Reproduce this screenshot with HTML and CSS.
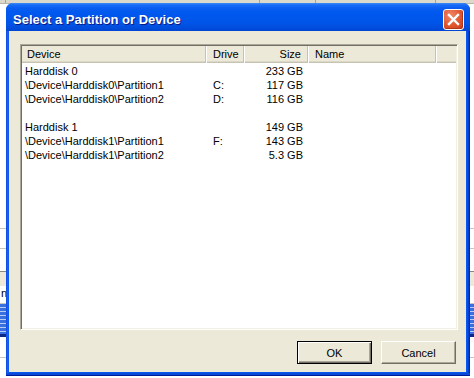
FILE: index.html
```html
<!DOCTYPE html>
<html lang="en">
<head>
  <meta charset="UTF-8">
  <title>Select a Partition or Device</title>
  <link rel="stylesheet" href="styles.css">
</head>
<body>
  <!-- the application window behind the dialog -->
  <div class="app">
    <div class="app-top">
      <span class="seg seg-a"></span>
      <span class="seg seg-b"></span>
      <span class="seg seg-c"></span>
      <span class="seg seg-d"></span>
    </div>
    <div class="app-body">
      <div class="app-row r1"></div>
      <div class="app-row r2"></div>
      <div class="app-row r3"></div>
      <div class="app-row r4"></div>
      <div class="app-row r5">n</div>
      <div class="app-row r6"></div>
      <div class="app-row r7"></div>
    </div>
  </div>

  <div class="dialog">
    <div class="titlebar">
      <span class="title">Select a Partition or Device</span>
      <button class="close" title="Close">
        <svg width="13" height="13" viewBox="0 0 13 13">
          <path d="M2 2 L11 11 M11 2 L2 11" stroke="#fff" stroke-width="2.4" stroke-linecap="square"/>
        </svg>
      </button>
    </div>

    <div class="client">
      <div class="listbox">
        <div class="lv-head">
          <div class="hd">Device</div>
          <div class="hd">Drive</div>
          <div class="hd right">Size</div>
          <div class="hd">Name</div>
          <div class="hd fill"></div>
        </div>
        <div class="lv-body">
          <div class="row"><span>Harddisk 0</span><span></span><span class="right">233 GB</span><span></span></div>
          <div class="row"><span>\Device\Harddisk0\Partition1</span><span>C:</span><span class="right">117 GB</span><span></span></div>
          <div class="row"><span>\Device\Harddisk0\Partition2</span><span>D:</span><span class="right">116 GB</span><span></span></div>
          <div class="row"><span></span><span></span><span></span><span></span></div>
          <div class="row"><span>Harddisk 1</span><span></span><span class="right">149 GB</span><span></span></div>
          <div class="row"><span>\Device\Harddisk1\Partition1</span><span>F:</span><span class="right">143 GB</span><span></span></div>
          <div class="row"><span>\Device\Harddisk1\Partition2</span><span></span><span class="right">5.3 GB</span><span></span></div>
        </div>
      </div>

      <div class="buttons">
        <button class="btn default">OK</button>
        <button class="btn">Cancel</button>
      </div>
    </div>
  </div>
</body>
</html>
```

FILE: styles.css
```css
:root {
  --face: #ece9d8;
  --shadow: #aca899;
  --dark: #716f64;
  --xp-blue: #0058ee;
}
body {
  margin: 0;
  width: 474px;
  height: 378px;
  overflow: hidden;
  position: relative;
  background: #fff;
  font-family: 'Liberation Sans', Arial, sans-serif;
  font-size: 11px;
  color: #000;
}

/* background application */
.app {
  height: 378px;
  display: flex;
  flex-direction: column;
}
.app-top {
  height: 3px;
  display: flex;
  background: #dcd8cc;
  border-bottom: 1px solid #b9b5a8;
}
.seg {
  border-right: 1px solid #a9a596;
}
.seg-a { width: 5px; }
.seg-b { width: 253px; }
.seg-c { width: 55px; }
.seg-d { width: 119px; }
.app-body {
  flex: 1;
  display: flex;
  flex-direction: column;
  padding-top: 215px;
}
.app-row {
  border-bottom: 1px solid #c9c6bb;
}
.r1 { height: 9px; }
.r2 { height: 19px; }
.r3 { height: 22px; border-bottom: 1px solid #8a877c; }
.r4 { height: 14px; background: #ece9d8; border-bottom: none; }
.r5 { height: 17px; line-height: 14px; padding-left: 1px; }
.r6 {
  height: 30px;
  background: repeating-linear-gradient(to bottom, #3a6fe0 0 3px, #b8cdf6 3px 4px);
  border-bottom: 3px solid #0a2a8a;
}
.r7 { height: 20px; }

/* dialog window */
.dialog {
  position: absolute;
  left: 6px;
  top: 3px;
  width: 464px;
  height: 373px;
  box-sizing: border-box;
  padding: 0 4px 4px 3px;
  display: flex;
  flex-direction: column;
  background: linear-gradient(to right, #0a3fd0 0, #1a62f2 1px, #0858ee 3px, #0858ee calc(100% - 3px), #0634c2 calc(100% - 1px), #001b99 100%);
  border-radius: 7px 7px 0 0;
  box-shadow: inset 0 -1px #001b99, inset 0 -3px #0a4ad8;
}
.titlebar {
  height: 29px;
  margin: 0 -4px 0 -3px;
  padding: 0 6px 0 7px;
  display: flex;
  align-items: center;
  justify-content: space-between;
  border-radius: 7px 7px 0 0;
  background: linear-gradient(to bottom, #3d8cf7 0, #1a6cf4 2px, #0a5df0 5px, #0058ee 10px, #0055e8 20px, #004ddc 25px, #0043cf 29px);
}
.title {
  font-family: 'Liberation Sans', Arial, sans-serif;
  font-weight: bold;
  font-size: 13px;
  color: #fff;
  text-shadow: 1px 1px #0a1883;
  padding-top: 4px;
}
.close {
  width: 21px;
  height: 21px;
  margin-top: 4px;
  padding: 0;
  display: flex;
  align-items: center;
  justify-content: center;
  border: 1px solid #fff;
  border-radius: 3px;
  background: radial-gradient(circle at 35% 30%, #ee8a6c 0, #e0562f 55%, #c63d17 100%);
  box-shadow: inset -1px -1px #b1361a;
}

.client {
  flex: 1;
  background: var(--face);
  display: flex;
  flex-direction: column;
  padding: 13px 8px 8px 11px;
}

/* list view */
.listbox {
  height: 286px;
  box-sizing: border-box;
  background: #fff;
  border: 1px solid;
  border-color: var(--shadow) #fff #fff var(--shadow);
  box-shadow: inset 1px 1px var(--dark), inset -1px -1px #f1efe2;
  padding: 1px;
}
.lv-head {
  display: grid;
  grid-template-columns: 185px 38px 64px 128px 1fr;
  height: 17px;
  background: var(--face);
  box-shadow: inset 0 -1px #c7c3b3, inset 0 -2px #dcd8c8;
}
.hd {
  line-height: 16px;
  padding: 0 6px;
  white-space: nowrap;
  border-right: 1px solid #fff;
  box-shadow: inset -1px 0 #c7c3b3;
}
.hd:first-child { padding-left: 5px; }
.hd.fill { border-right: none; box-shadow: none; }
.right { text-align: right; }
.hd.right { padding-right: 7px; }

.lv-body {
  padding-top: 1px;
}
.row {
  display: grid;
  grid-template-columns: 185px 38px 64px 128px;
  height: 14px;
  line-height: 14px;
}
.row span {
  padding: 0 6px;
  white-space: nowrap;
}
.row span:first-child { padding-left: 3px; }

/* buttons */
.buttons {
  display: flex;
  justify-content: flex-end;
  gap: 9px;
  margin-top: 11px;
  padding-right: 2px;
}
.btn {
  width: 75px;
  height: 23px;
  padding: 0;
  font-family: 'Liberation Sans', Arial, sans-serif;
  font-size: 11px;
  color: #000;
  background: var(--face);
  border: 1px solid;
  border-color: #fff var(--dark) var(--dark) #fff;
  box-shadow: inset -1px -1px var(--shadow);
}
.btn.default {
  border: 1px solid #000;
  box-shadow: inset 1px 1px #fff, inset -1px -1px var(--dark), inset -2px -2px var(--shadow);
}
```
